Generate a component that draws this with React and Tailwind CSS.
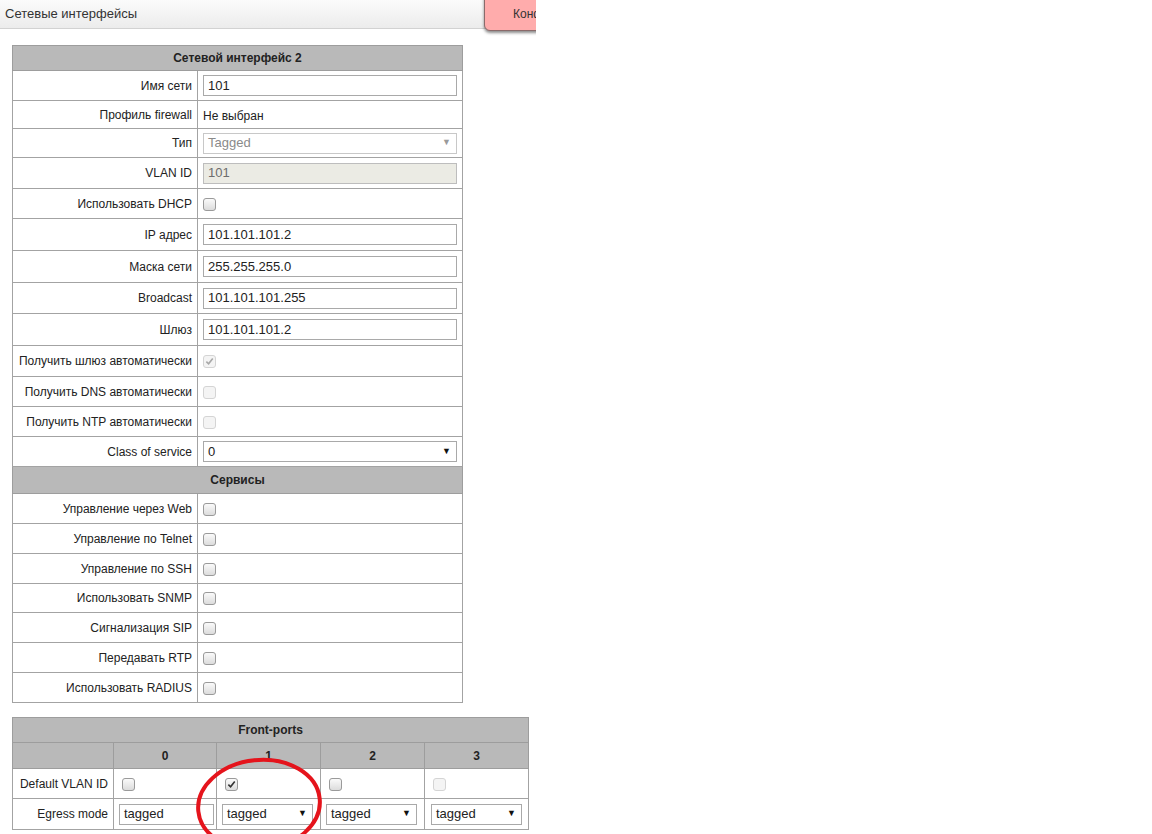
import React from "react";

const font = { fontFamily: '"Liberation Sans", Arial, sans-serif' };

function Check({ checked, disabled }) {
  return (
    <span
      className={`inline-flex items-center justify-center w-[13px] h-[13px] rounded-[3px] border align-middle ${
        disabled
          ? "border-[#d4d4d4] bg-[#f4f4f4]"
          : "border-[#9a9a9a] bg-gradient-to-b from-[#fafafa] to-[#dcdcdc]"
      }`}
    >
      {checked && (
        <svg width="9" height="9" viewBox="0 0 10 10">
          <path
            d="M1.5 5.2 L4 7.6 L8.6 1.8"
            fill="none"
            stroke={disabled ? "#a8a8a8" : "#333"}
            strokeWidth="1.8"
          />
        </svg>
      )}
    </span>
  );
}

function TextBox({ value, disabled, className = "w-[254px]" }) {
  return (
    <div
      className={`${className} h-[21px] border px-[4px] flex items-center text-[13px] ${
        disabled
          ? "border-[#bdbdbd] bg-[#ebebe4] text-[#6d6d6d]"
          : "border-[#a9a9a9] bg-white text-[#222]"
      }`}
    >
      {value}
    </div>
  );
}

function Select({ value, disabled, className = "w-[254px]", arrow = true }) {
  return (
    <div
      className={`${className} h-[21px] border flex items-center justify-between pl-[4px] pr-[5px] text-[13px] ${
        disabled
          ? "border-[#c8c8c8] bg-white text-[#8a8a8a]"
          : "border-[#a9a9a9] bg-white text-[#222]"
      }`}
    >
      <span>{value}</span>
      {arrow && (
        <span className={`text-[9px] ${disabled ? "text-[#9a9a9a]" : "text-[#111]"}`}>▼</span>
      )}
    </div>
  );
}

const rows = [
  { label: "Имя сети", h: 30, v: <TextBox value="101" /> },
  { label: "Профиль firewall", h: 28, v: <span className="text-[12px] text-[#222]">Не выбран</span> },
  { label: "Тип", h: 29, v: <Select value="Tagged" disabled /> },
  { label: "VLAN ID", h: 31, v: <TextBox value="101" disabled /> },
  { label: "Использовать DHCP", h: 30, v: <Check /> },
  { label: "IP адрес", h: 32, v: <TextBox value="101.101.101.2" /> },
  { label: "Маска сети", h: 32, v: <TextBox value="255.255.255.0" /> },
  { label: "Broadcast", h: 31, v: <TextBox value="101.101.101.255" /> },
  { label: "Шлюз", h: 32, v: <TextBox value="101.101.101.2" /> },
  { label: "Получить шлюз автоматически", h: 31, v: <Check checked disabled /> },
  { label: "Получить DNS автоматически", h: 30, v: <Check disabled /> },
  { label: "Получить NTP автоматически", h: 30, v: <Check disabled /> },
  { label: "Class of service", h: 30, v: <Select value="0" /> },
];

const services = [
  "Управление через Web",
  "Управление по Telnet",
  "Управление по SSH",
  "Использовать SNMP",
  "Сигнализация SIP",
  "Передавать RTP",
  "Использовать RADIUS",
];

function HeaderRow({ title, h = 26, cols = 2 }) {
  return (
    <tr style={{ height: h }}>
      <th
        colSpan={cols}
        className="bg-[#b9b9b9] border border-[#9d9d9d] text-[12px] font-bold text-[#222] text-center"
      >
        {title}
      </th>
    </tr>
  );
}

function Row({ label, h, children }) {
  return (
    <tr style={{ height: h }}>
      <td className="border border-[#a3a3a3] text-right pr-[5px] text-[12px] text-[#222] w-[185px]">
        {label}
      </td>
      <td className="border border-[#a3a3a3] pl-[5px] align-middle">{children}</td>
    </tr>
  );
}

export default function App() {
  return (
    <div className="min-h-[834px] w-[1152px] bg-white" style={font}>
      <div className="relative w-[536px] overflow-x-clip">
        <div className="h-[29px] bg-gradient-to-b from-[#fbfbfb] to-[#ececec] border-b border-[#d2d2d2] flex items-center pl-[5px]">
          <span className="text-[13px] text-[#333]">Сетевые интерфейсы</span>
        </div>
        <div className="absolute left-[484px] top-[-4px] w-[80px] h-[35px] bg-[#ffacac] border border-[#8a6a6a] rounded-b-[6px] shadow-[0_2px_3px_rgba(0,0,0,0.45)] pl-[28px] pt-[8px] text-[12px] text-[#333] whitespace-nowrap">
          Конфигурация
        </div>
      </div>

      <div className="pl-[12px] pt-[16px]">
        <table className="border-collapse w-[451px]">
          <tbody>
            <HeaderRow title="Сетевой интерфейс 2" h={25} />
            {rows.map((r) => (
              <Row key={r.label} label={r.label} h={r.h}>
                {r.v}
              </Row>
            ))}
            <HeaderRow title="Сервисы" h={27} />
            {services.map((s, i) => (
              <Row key={s} label={s} h={i === 3 ? 29 : 30}>
                <Check />
              </Row>
            ))}
          </tbody>
        </table>

        <div className="relative mt-[14px] w-[517px]">
          <table className="border-collapse w-[517px] table-fixed">
            <colgroup>
              <col className="w-[101px]" />
              <col className="w-[103px]" />
              <col className="w-[104px]" />
              <col className="w-[104px]" />
              <col className="w-[104px]" />
            </colgroup>
            <tbody>
              <HeaderRow title="Front-ports" h={25} cols={5} />
              <tr style={{ height: 26 }}>
                <th className="bg-[#b9b9b9] border border-[#9d9d9d]"></th>
                {["0", "1", "2", "3"].map((n) => (
                  <th
                    key={n}
                    className="bg-[#b9b9b9] border border-[#9d9d9d] text-[12px] font-bold text-[#222] text-center"
                  >
                    {n}
                  </th>
                ))}
              </tr>
              <tr style={{ height: 30 }}>
                <td className="border border-[#a3a3a3] text-right pr-[5px] text-[12px] text-[#222] whitespace-nowrap">
                  Default VLAN ID
                </td>
                <td className="border border-[#a3a3a3] pl-[8px]"><Check /></td>
                <td className="border border-[#a3a3a3] pl-[8px]"><Check checked /></td>
                <td className="border border-[#a3a3a3] pl-[8px]"><Check /></td>
                <td className="border border-[#a3a3a3] pl-[8px]"><Check disabled /></td>
              </tr>
              <tr style={{ height: 31 }}>
                <td className="border border-[#a3a3a3] text-right pr-[5px] text-[12px] text-[#222]">
                  Egress mode
                </td>
                <td className="border border-[#a3a3a3] pl-[5px]">
                  <Select value="tagged" className="w-[95px]" arrow={false} />
                </td>
                <td className="border border-[#a3a3a3] pl-[5px]">
                  <Select value="tagged" className="w-[91px]" />
                </td>
                <td className="border border-[#a3a3a3] pl-[5px]">
                  <Select value="tagged" className="w-[91px]" />
                </td>
                <td className="border border-[#a3a3a3] pl-[6px]">
                  <Select value="tagged" className="w-[91px]" />
                </td>
              </tr>
            </tbody>
          </table>
          <svg
            className="absolute left-[180px] top-[40px] pointer-events-none"
            width="140"
            height="77"
            viewBox="0 0 140 77"
          >
            <ellipse
              cx="67"
              cy="48"
              rx="61"
              ry="45"
              fill="none"
              stroke="#e5141c"
              strokeWidth="4"
              transform="rotate(-6 67 48)"
            />
          </svg>
        </div>
      </div>
    </div>
  );
}
